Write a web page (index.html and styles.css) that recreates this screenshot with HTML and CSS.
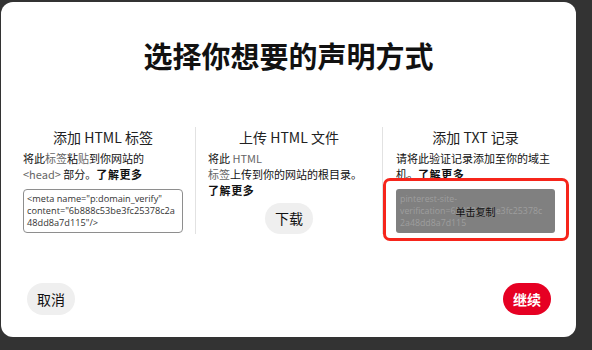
FILE: index.html
```html
<!DOCTYPE html>
<html lang="zh-CN">
<head>
<meta charset="utf-8">
<title>选择你想要的声明方式</title>
<link rel="stylesheet" href="styles.css">
</head>
<body>
<div class="modal">
  <h1 class="title">选择你想要的声明方式</h1>
  <div class="options">
    <div class="option">
      <h2 class="option-title">添加 HTML 标签</h2>
      <p class="option-text">将此<span class="soft">标签</span>粘<span class="soft">贴</span>到你网站的<br><span class="soft">&lt;head&gt;</span> 部分。<b>了解更多</b></p>
      <div class="code-box">&lt;meta name="p:domain_verify"<br>content="6b888c53be3fc25378c2a<br>48dd8a7d115"/&gt;</div>
    </div>
    <div class="option">
      <h2 class="option-title">上传 HTML 文件</h2>
      <p class="option-text">将此 <span class="soft">HTML</span><br><span class="soft">标签</span>上传到你的网站的根目录。<br><b>了解更多</b></p>
      <div class="center-row"><button class="btn btn-gray">下载</button></div>
    </div>
    <div class="option option-txt">
      <h2 class="option-title">添加 TXT 记录</h2>
      <p class="option-text">请将此验证记录添加至你的域主<br>机。<b>了解更多</b></p>
      <div class="copy-box">
        <div class="copy-value">pinterest-site-<br>verification=6b888c53be3fc25378c<br>2a48dd8a7d115</div>
        <div class="copy-label">单击复制</div>
      </div>
      <div class="highlight"></div>
    </div>
  </div>
  <div class="footer">
    <button class="btn btn-gray">取消</button>
    <button class="btn btn-red">继续</button>
  </div>
</div>
</body>
</html>
```
FILE: styles.css
```css
html, body {
  margin: 0;
  padding: 0;
  background: #333333;
  width: 592px;
  height: 350px;
  overflow: hidden;
}
body {
  padding: 2px 0 0 1px;
  box-sizing: border-box;
  font-family: "Open Sans", "Noto Sans CJK SC", sans-serif;
  color: #111111;
}
.modal {
  width: 575px;
  height: 335px;
  background: #ffffff;
  border-radius: 12px;
  box-sizing: border-box;
  padding: 35px 0 0 0;
  display: flex;
  flex-direction: column;
}
.title {
  margin: 0;
  text-align: center;
  font-family: "Noto Sans CJK SC", sans-serif;
  font-size: 29px;
  line-height: 36px;
  font-weight: 700;
  color: #111111;
}
.options {
  margin-top: 54px;
  padding: 0 9px 0 10px;
  display: grid;
  grid-template-columns: 184px 187px 185px;
}
.option {
  padding: 0 12px;
  position: relative;
}
.option + .option {
  border-left: 1px solid #e2e2e2;
}
.option-txt {
  padding-left: 13px;
}
.option-title {
  margin: 0 0 3px;
  text-align: center;
  font-family: "Noto Sans CJK SC", sans-serif;
  font-size: 14px;
  line-height: 20px;
  font-weight: 400;
  color: #222222;
}
.option-text {
  margin: 0;
  font-family: "Noto Sans CJK SC", sans-serif;
  font-size: 11px;
  line-height: 16px;
  color: #111111;
  white-space: nowrap;
}
.option-text b {
  font-weight: 700;
  letter-spacing: 0.6px;
}
.soft {
  color: #666666;
}
.code-box {
  margin-top: 7px;
  border: 1px solid #8e8e8e;
  border-radius: 4px;
  padding: 3px 3px;
  font-size: 9.2px;
  line-height: 12px;
  color: #333333;
  white-space: nowrap;
  overflow: hidden;
}
.center-row {
  display: flex;
  justify-content: center;
  margin-top: 5px;
}
.btn {
  border: none;
  height: 31px;
  padding: 0 10px;
  border-radius: 16px;
  font-family: "Noto Sans CJK SC", sans-serif;
  font-size: 14px;
  line-height: 31px;
  cursor: pointer;
}
.btn-gray {
  background: #efefef;
  color: #111111;
}
.btn-red {
  background: #e60023;
  color: #ffffff;
  font-weight: 700;
}
.copy-box {
  margin-top: 7px;
  position: relative;
  background: #808080;
  border-radius: 3px;
  padding: 4px 4px 3px;
  height: 44px;
  box-sizing: border-box;
}
.copy-value {
  font-size: 8.8px;
  line-height: 12px;
  color: #9e9e9e;
  white-space: nowrap;
}
.copy-label {
  position: absolute;
  inset: 0;
  display: flex;
  align-items: center;
  justify-content: center;
  font-family: "Noto Sans CJK SC", sans-serif;
  font-size: 10px;
  color: #111111;
}
.highlight {
  position: absolute;
  left: 0;
  right: -2px;
  top: 51px;
  height: 63px;
  border: 3px solid #f6251b;
  border-radius: 7px;
  box-sizing: border-box;
  pointer-events: none;
}
.footer {
  margin-top: auto;
  padding: 0 25px 22px 26px;
  display: flex;
  justify-content: space-between;
  align-items: center;
}
.footer .btn {
  height: 32px;
  line-height: 32px;
}
```
